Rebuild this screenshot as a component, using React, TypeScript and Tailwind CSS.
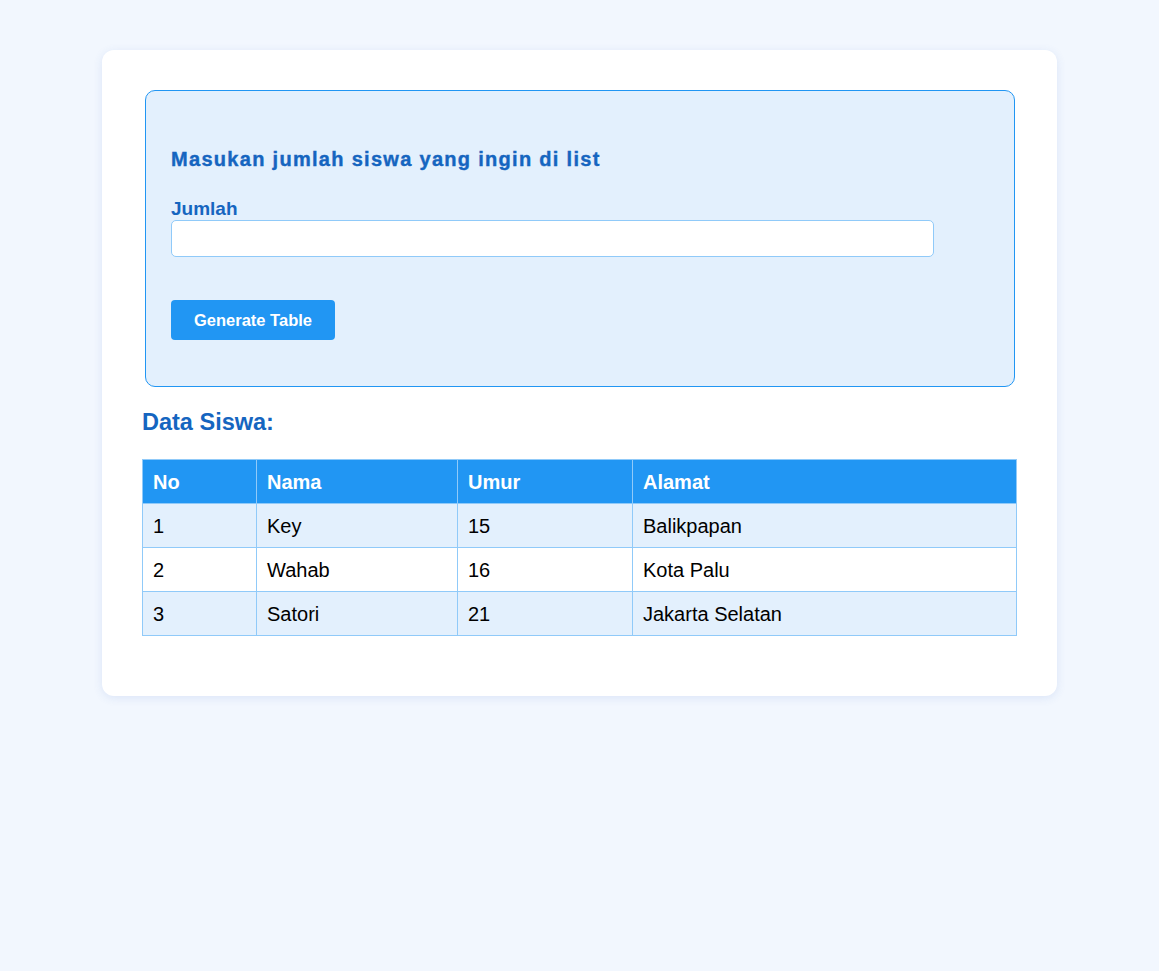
import { useState } from 'react'

const rows = [
  { no: 1, nama: 'Key', umur: 15, alamat: 'Balikpapan' },
  { no: 2, nama: 'Wahab', umur: 16, alamat: 'Kota Palu' },
  { no: 3, nama: 'Satori', umur: 21, alamat: 'Jakarta Selatan' },
]

export default function App() {
  const [jumlah, setJumlah] = useState('')

  return (
    <div className="min-h-[971px] bg-[#f2f7fe] pt-[50px] font-['Liberation_Sans',Arial,sans-serif]">
      <div className="w-[955px] mx-auto bg-white rounded-xl p-10 shadow-[0_2px_10px_rgba(60,100,200,0.12)]">
        <div className="ml-[3px] mr-[2px] border border-[#2196f3] rounded-[10px] bg-[#e3f0fd] px-[25px] pt-[57px] pb-[46px]">
          <h3 className="text-[20px] font-bold tracking-[1.3px] text-[#1565c0] leading-[22px] [-webkit-text-stroke:0.4px_#1565c0]">
            Masukan jumlah siswa yang ingin di list
          </h3>
          <label className="block mt-[27px] text-[19px] font-bold text-[#1565c0] leading-[23px]">Jumlah</label>
          <input
            type="number"
            value={jumlah}
            onChange={(e) => setJumlah(e.target.value)}
            className="block w-[763px] h-[37px] bg-white border border-[#90caf9] rounded-[5px] px-2 outline-none"
          />
          <button className="mt-[43px] w-[164px] h-10 rounded bg-[#2196f3] text-white text-[16.5px] font-bold">
            Generate Table
          </button>
        </div>

        <h2 className="mt-[23px] text-[23.5px] font-bold text-[#1565c0] leading-[24px]">Data Siswa:</h2>

        <table className="mt-[25px] mb-5 w-full border-collapse text-[20px]">
          <thead>
            <tr className="bg-[#2196f3] text-white">
              <th className="w-[114px] border border-[#90caf9] px-[10px] h-11 text-left font-bold">No</th>
              <th className="w-[201px] border border-[#90caf9] px-[10px] h-11 text-left font-bold">Nama</th>
              <th className="w-[175px] border border-[#90caf9] px-[10px] h-11 text-left font-bold">Umur</th>
              <th className="border border-[#90caf9] px-[10px] h-11 text-left font-bold">Alamat</th>
            </tr>
          </thead>
          <tbody>
            {rows.map((r, i) => (
              <tr key={r.no} className={i % 2 === 0 ? 'bg-[#e3f0fd]' : 'bg-white'}>
                <td className="border border-[#90caf9] px-[10px] h-11 text-black">{r.no}</td>
                <td className="border border-[#90caf9] px-[10px] h-11 text-black">{r.nama}</td>
                <td className="border border-[#90caf9] px-[10px] h-11 text-black">{r.umur}</td>
                <td className="border border-[#90caf9] px-[10px] h-11 text-black">{r.alamat}</td>
              </tr>
            ))}
          </tbody>
        </table>
      </div>
    </div>
  )
}
